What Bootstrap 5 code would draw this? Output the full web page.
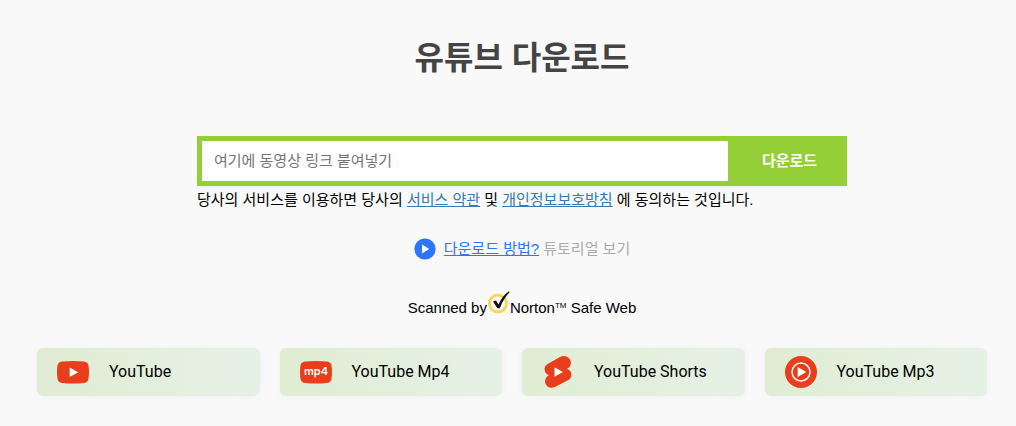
<!DOCTYPE html>
<html lang="ko">
<head>
<meta charset="utf-8">
<meta name="viewport" content="width=device-width, initial-scale=1">
<title>유튜브 다운로드</title>
<link href="https://cdn.jsdelivr.net/npm/bootstrap@5.3.0/dist/css/bootstrap.min.css" rel="stylesheet">
<style>
  body { background: #f9f9f9; color: #000; font-family: "Liberation Sans", "Noto Sans CJK KR", sans-serif; font-size: 15px; line-height: 20px; }
  .page-main { padding: 34px 0 28px 28px; }
  .page-title { color: #444; font-size: 32px; line-height: 48px; margin-bottom: 54px; }
  .download-form { max-width: 650px; }
  .search-bar { background: #94cf38; padding: 5px 0 5px 5px; height: 50px; box-shadow: 0 1px 2px rgba(0,0,0,.06); }
  .search-bar .form-control { border-radius: 0; padding: 0 12px; font-size: 15px; }
  .search-bar .form-control::placeholder { color: #757575; }
  .search-bar .btn { width: 119px; color: #fff; font-size: 15px; padding: 0 0 0 4px; }
  .terms { margin: 4px 0 28px; }
  .terms a { color: #337ab7; }
  .tutorial { gap: 8px; color: #aaa; margin-bottom: 31px; }
  .tutorial a { color: #2d74ff; }
  .norton { margin-bottom: 30px; }
  .norton .trade { font-size: 8px; line-height: 16px; }
  .site-links { padding: 0 29px 0 9px; gap: 20px; }
  .site-link { height: 48px; padding-left: 20px; gap: 20px; border-radius: 6px; background: linear-gradient(90deg, #e0edd3, #e6f1e6); box-shadow: 0 1px 6px rgba(0,0,0,.04); color: #000; font-family: Roboto, sans-serif; font-size: 16px; line-height: 22px; min-width: 190px; flex: 1 1 0; }
</style>
</head>
<body>
<main class="page-main">
  <h1 class="page-title text-center fw-bold">유튜브 다운로드</h1>
  <form class="download-form mx-auto">
    <div class="search-bar d-flex">
      <input class="form-control border-0" type="text" placeholder="여기에 동영상 링크 붙여넣기" aria-label="동영상 링크">
      <button class="btn border-0 fw-bold flex-shrink-0" type="submit">다운로드</button>
    </div>
    <p class="terms">당사의 서비스를 이용하면 당사의 <a href="#terms">서비스 약관</a> 및 <a href="#privacy">개인정보보호방침</a> 에 동의하는 것입니다.</p>
  </form>
  <div class="tutorial d-flex justify-content-center align-items-center">
    <svg width="22" height="22" viewBox="0 0 22 22" aria-hidden="true"><circle cx="11" cy="11" r="10.6" fill="#2d74ff"/><path d="M8 6.5v9l7.200-4.500z" fill="#fff"/></svg>
    <span><a href="#tutorial">다운로드 방법?</a> 튜토리얼 보기</span>
  </div>
  <div class="norton d-flex justify-content-center align-items-end">
    <span>Scanned by</span>
    <svg class="mb-1" width="23" height="23" viewBox="0 0 23 23" aria-hidden="true"><circle cx="11" cy="12.500" r="8.500" fill="#fff" stroke="#fbd55c" stroke-width="3"/><path d="M6 10.500L9 9.500l2.500 4C14 7.500 18 3 22 .3l.6 1C18.500 5.500 15.500 10.500 12.800 17.200h-2.400z" fill="#111"/></svg>
    <span>Norton</span><span class="trade mb-1">TM</span><span>&nbsp;Safe Web</span>
  </div>
  <nav class="site-links d-flex flex-wrap" aria-label="YouTube">
    <a class="site-link d-flex align-items-center text-decoration-none" href="#youtube">
      <svg width="32" height="32" viewBox="0 0 32 32" aria-hidden="true"><path d="M5 5.500Q16 4.500 27 5.500Q31.300 6 31.600 10Q32.400 16 31.600 22Q31.300 26.500 27 27Q16 28 5 27Q.7 26.500.4 22Q-.4 16 .4 10Q.7 6 5 5.500z" fill="#e93d1b"/><path d="M12.700 11.500v9.500l8.500-4.700z" fill="#fff"/></svg>
      <span>YouTube</span>
    </a>
    <a class="site-link d-flex align-items-center text-decoration-none" href="#mp4">
      <svg width="32" height="32" viewBox="0 0 32 32" aria-hidden="true"><path d="M5 5.500Q16 4.500 27 5.500Q31.300 6 31.600 10Q32.400 16 31.600 22Q31.300 26.500 27 27Q16 28 5 27Q.7 26.500.4 22Q-.4 16 .4 10Q.7 6 5 5.500z" fill="#e93d1b"/><text x="16" y="19" text-anchor="middle" font-family="Inter, sans-serif" font-weight="600" font-size="11" fill="#fff">mp4</text></svg>
      <span>YouTube Mp4</span>
    </a>
    <a class="site-link d-flex align-items-center text-decoration-none" href="#shorts">
      <svg width="32" height="32" viewBox="0 0 32 32" aria-hidden="true"><path d="M18 1C22 -1 26.500.5 28.200 4C29.800 7.500 28.500 11 25 13C28.500 13.800 30 17 29.200 20.300C28.700 22.300 27.500 23.500 26 24.300L12.800 31C9 32.800 5 31.500 3.600 28C2.200 24.500 3.500 21 7 19C3.500 18.200 2 15 2.800 11.800C3.300 9.800 4.500 8.600 6 7.800z" fill="#e93d1b"/><path d="M12.500 11.300v9.400l8.500-4.700z" fill="#fff"/></svg>
      <span>YouTube Shorts</span>
    </a>
    <a class="site-link d-flex align-items-center text-decoration-none" href="#mp3">
      <svg width="32" height="32" viewBox="0 0 32 32" aria-hidden="true"><circle cx="16" cy="16" r="16" fill="#e93d1b"/><circle cx="16" cy="16" r="9" fill="none" stroke="#fff" stroke-width="1.500"/><path d="M12.700 11v10l8.500-5z" fill="#fff"/></svg>
      <span>YouTube Mp3</span>
    </a>
  </nav>
</main>
<script src="https://cdn.jsdelivr.net/npm/bootstrap@5.3.0/dist/js/bootstrap.bundle.min.js"></script>
</body>
</html>
